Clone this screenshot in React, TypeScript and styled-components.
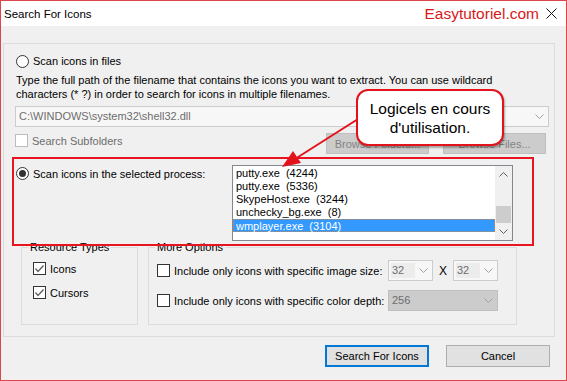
import styled, { createGlobalStyle } from 'styled-components';

const uiFont = `"Liberation Sans", Arial, sans-serif`;

const GlobalStyle = createGlobalStyle`
    html, body {
        margin: 0;
        padding: 0;
        background: #ffffff;
    }
    body {
        font-family: ${uiFont};
    }
`;

const Window = styled.div`
    position: relative;
    width: 567px;
    height: 381px;
    box-sizing: border-box;
    border: 1px solid #dc454b;
    background: #f0f0f0;
    display: flex;
    flex-direction: column;
    font-family: ${uiFont};
    font-size: 11px;
    color: #000;
    overflow: hidden;
`;

const TitleBar = styled.div`
    height: 25px;
    flex: none;
    background: #ffffff;
    display: flex;
    align-items: center;
    padding: 0 9px 0 3px;
`;

const Title = styled.div`
    font-size: 11.5px;
    flex: 1;
`;

const Brand = styled.div`
    font-size: 15.5px;
    color: #d71920;
    margin-right: 7px;
`;

const Body = styled.div`
    flex: 1;
    display: flex;
    flex-direction: column;
    padding: 17px 11px 0 2px;
`;

const OuterGroup = styled.div`
    border: 1px solid #dcdcdc;
    padding: 10px 0 11px 11px;
    display: flex;
    flex-direction: column;
`;

const Row = styled.div<{ $top?: number; $height?: number }>`
    display: flex;
    align-items: center;
    margin-top: ${({ $top }) => $top ?? 0}px;
    height: ${({ $height }) => ($height ? `${$height}px` : 'auto')};
`;

const RadioCircle = styled.span<{ $checked?: boolean }>`
    position: relative;
    flex: none;
    width: 13px;
    height: 13px;
    box-sizing: border-box;
    border: 1px solid #333;
    border-radius: 50%;
    background: #fff;
    margin: 0 4px 0 1px;

    &::after {
        content: '';
        display: ${({ $checked }) => ($checked ? 'block' : 'none')};
        position: absolute;
        left: 2px;
        top: 2px;
        width: 7px;
        height: 7px;
        border-radius: 50%;
        background: #333;
    }
`;

const Description = styled.div`
    margin: 5px 0 0 1px;
    line-height: 14px;
`;

const Combo = styled.div<{ $width: number; $disabled?: boolean }>`
    display: flex;
    align-items: center;
    flex: none;
    width: ${({ $width }) => $width}px;
    height: 21px;
    box-sizing: border-box;
    border: 1px solid ${({ $disabled }) => ($disabled ? '#bfbfbf' : '#cccccc')};
    background: ${({ $disabled }) => ($disabled ? '#cccccc' : '#f7f7f7')};
    color: #6d6d6d;
    padding: 0 4px 0 2px;
`;

const ComboText = styled.span<{ $fill?: boolean }>`
    flex: 1;
    height: 15px;
    line-height: 15px;
    padding-left: 1px;
    background: ${({ $fill }) => ($fill ? '#ececec' : 'transparent')};
    margin-right: 4px;
    white-space: nowrap;
`;

const PathCombo = styled(Combo)`
    margin-top: 5px;
`;

const CheckBox = styled.span<{ $disabled?: boolean }>`
    flex: none;
    display: flex;
    align-items: center;
    justify-content: center;
    width: 13px;
    height: 13px;
    box-sizing: border-box;
    border: 1px solid ${({ $disabled }) => ($disabled ? '#bcbcbc' : '#333')};
    background: #fff;
    margin-right: 4px;
`;

const CheckLabel = styled.label<{ $disabled?: boolean; $width?: number }>`
    display: flex;
    align-items: center;
    color: ${({ $disabled }) => ($disabled ? '#6d6d6d' : '#000')};
    width: ${({ $width }) => ($width ? `${$width}px` : 'auto')};
    flex: ${({ $width }) => ($width ? 'none' : '1')};
    white-space: nowrap;
`;

const SubRow = styled.div`
    display: flex;
    align-items: flex-start;
    margin-top: 6px;
    height: 21px;
    padding-right: 8px;

    ${CheckLabel} {
        margin-top: 1px;
    }
`;

const DialogButton = styled.button<{ $primary?: boolean; $disabled?: boolean }>`
    flex: none;
    width: 104px;
    height: 22px;
    box-sizing: border-box;
    font-family: ${uiFont};
    font-size: 11px;
    padding: 0;
    color: ${({ $disabled }) => ($disabled ? '#838383' : '#000')};
    background: ${({ $disabled }) => ($disabled ? '#cccccc' : '#e1e1e1')};
    border: ${({ $primary, $disabled }) =>
        $primary ? '2px solid #0078d7' : `1px solid ${$disabled ? '#bfbfbf' : '#adadad'}`};
`;

const BrowseButton = styled(DialogButton)`
    width: 103px;
    height: 21px;
    & + & {
        margin-left: 14px;
    }
`;

const ProcessRow = styled.div`
    display: flex;
    align-items: flex-start;
    margin-top: 11px;
    height: 76px;
`;

const ProcessLabel = styled.label`
    display: flex;
    align-items: center;
    width: 217px;
    flex: none;
    margin-top: 2px;
`;

const ListBox = styled.div`
    display: flex;
    width: 281px;
    height: 76px;
    box-sizing: border-box;
    border: 1px solid #828790;
    background: #fff;
`;

const ListItems = styled.div`
    flex: 1;
    padding: 1px 0 0 0;
`;

const ListItem = styled.div<{ $selected?: boolean }>`
    height: 13px;
    line-height: 13px;
    box-sizing: border-box;
    padding-left: ${({ $selected }) => ($selected ? 2 : 3)}px;
    white-space: pre;
    color: ${({ $selected }) => ($selected ? '#fff' : '#000')};
    background: ${({ $selected }) => ($selected ? '#3399ff' : 'transparent')};
    border: ${({ $selected }) => ($selected ? '1px dotted #c98a4b' : 'none')};
`;

const ScrollBar = styled.div`
    width: 17px;
    flex: none;
    display: flex;
    flex-direction: column;
    background: #f0f0f0;
`;

const ScrollButton = styled.div`
    height: 17px;
    display: flex;
    align-items: center;
    justify-content: center;
`;

const ScrollTrack = styled.div`
    flex: 1;
    display: flex;
    flex-direction: column;
    justify-content: flex-end;
    padding: 0 1px;
`;

const ScrollThumb = styled.div`
    height: 17px;
    background: #cdcdcd;
`;

const OptionsRow = styled.div`
    display: flex;
    margin: -1px 0 0 6px;
    gap: 10px;
`;

const GroupBox = styled.fieldset<{ $width: number }>`
    width: ${({ $width }) => $width}px;
    box-sizing: border-box;
    margin: 0;
    padding: 0;
    border: 1px solid #dcdcdc;
    min-width: 0;
`;

const Legend = styled.legend`
    margin-left: 6px;
    padding: 0 2px;
    line-height: 14px;
`;

const GroupContent = styled.div<{ $left: number }>`
    height: 70px;
    display: flex;
    flex-direction: column;
    padding-left: ${({ $left }) => $left}px;
`;

const TimesSign = styled.span`
    width: 20px;
    text-align: center;
    font-size: 12px;
`;

const Footer = styled.div`
    display: flex;
    justify-content: flex-end;
    gap: 17px;
    margin-top: 8px;
    padding-right: 5px;
`;

const Highlight = styled.div`
    position: absolute;
    left: 11px;
    top: 156px;
    width: 522px;
    height: 89px;
    box-sizing: border-box;
    border: 2px solid #e8141f;
    pointer-events: none;
`;

const Callout = styled.div`
    position: absolute;
    left: 355px;
    top: 88px;
    width: 148px;
    height: 57px;
    box-sizing: border-box;
    border: 2px solid #e3121b;
    border-radius: 12px;
    background: #fff;
    box-shadow: 1px 2px 2px rgba(0, 0, 0, 0.3);
    display: flex;
    flex-direction: column;
    align-items: center;
    justify-content: center;
    font-size: 15.5px;
    line-height: 19px;
    color: #000;
`;

const Overlay = styled.svg`
    position: absolute;
    left: 0;
    top: 0;
    pointer-events: none;
`;

const Chevron = ({ up, color = '#a0a0a0' }: { up?: boolean; color?: string }) => (
    <svg width="9" height="5" viewBox="0 0 9 5">
        <polyline
            points={up ? '0.5,4.5 4.5,0.5 8.5,4.5' : '0.5,0.5 4.5,4.5 8.5,0.5'}
            fill="none"
            stroke={color}
            strokeWidth="1"
        />
    </svg>
);

const Check = () => (
    <svg width="9" height="8" viewBox="0 0 9 8">
        <polyline points="0.5,3.5 3,6.5 8.5,0.5" fill="none" stroke="#5a5a5a" strokeWidth="1.2" />
    </svg>
);

const processes = [
    'putty.exe  (4244)',
    'putty.exe  (5336)',
    'SkypeHost.exe  (3244)',
    'unchecky_bg.exe  (8)',
    'wmplayer.exe  (3104)',
];

export default function App() {
    return (
        <>
            <GlobalStyle />
            <Window>
                <TitleBar>
                    <Title>Search For Icons</Title>
                    <Brand>Easytutoriel.com</Brand>
                    <svg width="11" height="11" viewBox="0 0 11 11">
                        <path d="M0.5 0.5 L10.5 10.5 M10.5 0.5 L0.5 10.5" stroke="#111" strokeWidth="1" />
                    </svg>
                </TitleBar>
                <Body>
                    <OuterGroup>
                        <Row $height={14}>
                            <RadioCircle />
                            Scan icons in files
                        </Row>
                        <Description>
                            Type the full path of the filename that contains the icons you want to extract. You can use wildcard
                            <br />
                            characters (* ?) in order to search for icons in multiple filenames.
                        </Description>
                        <PathCombo $width={534}>
                            <ComboText>C:\WINDOWS\system32\shell32.dll</ComboText>
                            <Chevron />
                        </PathCombo>
                        <SubRow>
                            <CheckLabel $disabled>
                                <CheckBox $disabled />
                                Search Subfolders
                            </CheckLabel>
                            <BrowseButton $disabled>Browse Folders...</BrowseButton>
                            <BrowseButton $disabled>Browse Files...</BrowseButton>
                        </SubRow>
                        <ProcessRow>
                            <ProcessLabel>
                                <RadioCircle $checked />
                                Scan icons in the selected process:
                            </ProcessLabel>
                            <ListBox>
                                <ListItems>
                                    {processes.map((p, i) => (
                                        <ListItem key={p} $selected={i === processes.length - 1}>
                                            {p}
                                        </ListItem>
                                    ))}
                                </ListItems>
                                <ScrollBar>
                                    <ScrollButton>
                                        <Chevron up color="#606060" />
                                    </ScrollButton>
                                    <ScrollTrack>
                                        <ScrollThumb />
                                    </ScrollTrack>
                                    <ScrollButton>
                                        <Chevron color="#606060" />
                                    </ScrollButton>
                                </ScrollBar>
                            </ListBox>
                        </ProcessRow>
                        <OptionsRow>
                            <GroupBox $width={117}>
                                <Legend>Resource Types</Legend>
                                <GroupContent $left={11}>
                                    <Row $top={8} $height={13}>
                                        <CheckLabel>
                                            <CheckBox>
                                                <Check />
                                            </CheckBox>
                                            Icons
                                        </CheckLabel>
                                    </Row>
                                    <Row $top={11} $height={13}>
                                        <CheckLabel>
                                            <CheckBox>
                                                <Check />
                                            </CheckBox>
                                            Cursors
                                        </CheckLabel>
                                    </Row>
                                </GroupContent>
                            </GroupBox>
                            <GroupBox $width={369}>
                                <Legend>More Options</Legend>
                                <GroupContent $left={8}>
                                    <Row $top={6} $height={21}>
                                        <CheckLabel $width={231}>
                                            <CheckBox />
                                            Include only icons with specific image size:
                                        </CheckLabel>
                                        <Combo $width={45}>
                                            <ComboText $fill>32</ComboText>
                                            <Chevron />
                                        </Combo>
                                        <TimesSign>X</TimesSign>
                                        <Combo $width={45}>
                                            <ComboText $fill>32</ComboText>
                                            <Chevron />
                                        </Combo>
                                    </Row>
                                    <Row $top={9} $height={21}>
                                        <CheckLabel $width={231}>
                                            <CheckBox />
                                            Include only icons with specific color depth:
                                        </CheckLabel>
                                        <Combo $width={110} $disabled>
                                            <ComboText>256</ComboText>
                                            <Chevron />
                                        </Combo>
                                    </Row>
                                </GroupContent>
                            </GroupBox>
                        </OptionsRow>
                    </OuterGroup>
                    <Footer>
                        <DialogButton $primary>Search For Icons</DialogButton>
                        <DialogButton>Cancel</DialogButton>
                    </Footer>
                </Body>
                <Highlight />
                <Overlay width="567" height="381" viewBox="0 0 567 381">
                    <line x1="357" y1="118" x2="294" y2="158" stroke="#e3121b" strokeWidth="2" />
                    <polygon points="281,166 300,162 292,150" fill="#e3121b" />
                </Overlay>
                <Callout>
                    <span>Logicels en cours</span>
                    <span>d'utilisation.</span>
                </Callout>
            </Window>
        </>
    );
}
